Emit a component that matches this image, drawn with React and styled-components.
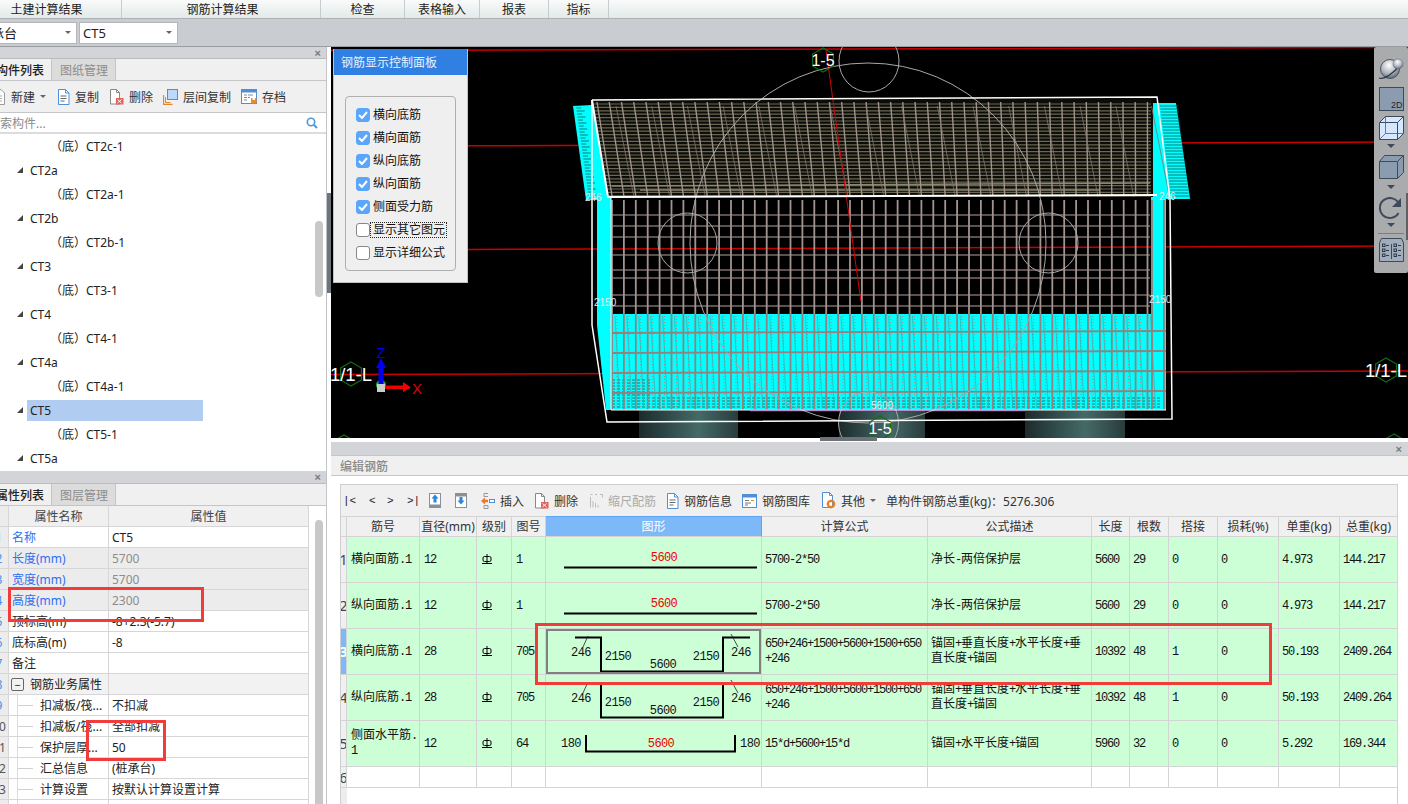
import React from 'react';
import styled, { createGlobalStyle } from 'styled-components';

const UI_FONT = `"Noto Sans", "Noto Sans CJK SC", sans-serif`;

const GlobalStyle = createGlobalStyle`
  html, body {
    margin: 0;
    padding: 0;
    background: #d3d4d8;
    overflow: hidden;
  }
  * {
    box-sizing: border-box;
  }
`;

const Page = styled.div`
  position: relative;
  width: 1408px;
  height: 804px;
  overflow: hidden;
  font-family: ${UI_FONT};
  font-size: 12px;
  color: #222;
  background: #d3d4d8;
`;

/* top menu */
const MenuBar = styled.div`
  display: flex;
  height: 19px;
  background: linear-gradient(#f8fbfa, #e3eae9);
  border-bottom: 1px solid #aeb2b5;
`;

const MenuItem = styled.div`
  display: flex;
  align-items: center;
  justify-content: center;
  flex: none;
  width: ${(p) => p.$w}px;
  height: 18px;
  margin-left: ${(p) => p.$ml || 0}px;
  padding-left: ${(p) => p.$pl || 0}px;
  border-right: 1px solid #c6cbcb;
`;

const SelectBar = styled.div`
  display: flex;
  align-items: center;
  gap: 2px;
  height: 28px;
  background: #c9ccd0;
  border-bottom: 1px solid #9a9da0;
`;

const Select = styled.div`
  display: flex;
  align-items: center;
  justify-content: space-between;
  flex: none;
  width: ${(p) => p.$w}px;
  height: 22px;
  margin-left: ${(p) => p.$ml || 0}px;
  padding: 0 5px 0 3px;
  background: #fff;
  border: 1px solid #b4b6b9;
  font-size: 13px;
`;

const Caret = styled.span`
  width: 0;
  height: 0;
  border-left: 3px solid transparent;
  border-right: 3px solid transparent;
  border-top: 3px solid ${(p) => p.$color || '#666'};
`;

const Main = styled.div`
  display: flex;
  height: 757px;
`;

/* left column */
const LeftColumn = styled.div`
  position: relative;
  display: flex;
  flex-direction: column;
  width: 331px;
  flex: none;
  padding-right: 4px;
  background: #fff;
`;

const SideThumb = styled.div`
  position: absolute;
  top: 146px;
  left: 327px;
  width: 4px;
  height: 100px;
  background: #6c747c;
`;

const Panel = styled.div`
  display: flex;
  flex-direction: column;
  height: ${(p) => p.$h}px;
  overflow: hidden;
  background: #f0f0f0;
  border-right: 1px solid #c2c3c6;
`;

const PanelGrip = styled.div`
  display: flex;
  align-items: center;
  justify-content: flex-end;
  flex: none;
  height: ${(p) => p.$h || 12}px;
  padding-right: 5px;
  background: #d3d4d8;
  color: #77797d;
  font-size: 11px;
  font-family: "Liberation Sans", sans-serif;
  font-weight: bold;
  border-bottom: 1px solid #bbbcc0;
`;

const TabRow = styled.div`
  display: flex;
  flex: none;
  height: 22px;
  background: #f0f0f0;
  border-bottom: 1px solid #c4c5c8;
`;

const Tab = styled.div`
  display: flex;
  align-items: center;
  flex: none;
  height: 21px;
  width: 64px;
  padding: 0 8px;
  font-weight: ${(p) => (p.$active ? 500 : 400)};
  color: ${(p) => (p.$active ? '#222' : '#8d8d8d')};
  background: ${(p) => (p.$active ? '#f0f0f0' : '#dcdcdc')};
  border-right: 1px solid #c4c5c8;
  margin-left: ${(p) => p.$ml || 0}px;
  white-space: nowrap;
`;

const Tools = styled.div`
  display: flex;
  align-items: center;
  flex: none;
  height: 32px;
  margin-left: -7px;
  border-bottom: 1px solid #c4c5c8;
`;

const Tool = styled.div`
  display: flex;
  align-items: center;
  gap: 5px;
  margin-right: ${(p) => p.$mr ?? 11}px;
  white-space: nowrap;
  color: ${(p) => (p.$disabled ? '#aaa' : '#333')};
`;

const MoreArrows = styled.div`
  margin-left: 50px;
  font-size: 9px;
  letter-spacing: -2px;
  color: #444;
`;

const Search = styled.div`
  display: flex;
  align-items: center;
  justify-content: space-between;
  flex: none;
  height: 21px;
  padding: 1px 8px 0 0;
  background: #fff;
  color: #8c8c8c;
  border-bottom: 2px solid #dcdcdc;
`;

const SearchText = styled.span`
  margin-left: -12px;
`;

const TreeBox = styled.div`
  position: relative;
  flex: 1;
  background: #fff;
  overflow: hidden;
`;

const TreeRow = styled.div`
  display: flex;
  align-items: center;
  gap: 7px;
  height: 24px;
  padding-left: ${(p) => (p.$leaf ? 50 : 17)}px;
  color: #222;
`;

const TreeArrow = styled.span`
  width: 0;
  height: 0;
  border-bottom: 6px solid #444;
  border-left: 6px solid transparent;
`;

const TreeLabel = styled.span`
  display: flex;
  align-items: center;
  width: 176px;
  height: 21px;
  margin-left: -3px;
  padding-left: 3px;
  background: ${(p) => (p.$selected ? '#b0ccf0' : 'transparent')};
`;

const TreeThumb = styled.div`
  position: absolute;
  top: 87px;
  left: 315px;
  width: 8px;
  height: 76px;
  border-radius: 4px;
  background: #c8c8c8;
`;

/* property table */
const PropScroll = styled.div`
  position: relative;
  flex: 1;
  overflow: hidden;
  background: #fff;
`;

const PropRow = styled.div`
  display: grid;
  grid-template-columns: 9px 100px 200px;
  height: 21px;
  width: 309px;
  background: ${(p) => p.$bg || '#fff'};
`;

const PropCell = styled.div`
  display: flex;
  align-items: center;
  padding-left: ${(p) => p.$pad ?? 3}px;
  justify-content: ${(p) => (p.$center ? 'center' : 'flex-start')};
  color: ${(p) => p.$color || '#222'};
  border-right: 1px solid #d6d6d6;
  border-bottom: 1px solid #d6d6d6;
  white-space: nowrap;
  overflow: hidden;
`;

const RowNum = styled.div`
  display: flex;
  align-items: center;
  justify-content: center;
  margin-left: -10px;
  background: #ececec;
  color: ${(p) => (p.$blue ? '#4a90e8' : '#555')};
  border-right: 1px solid #d6d6d6;
  border-bottom: 1px solid #d6d6d6;
`;

const HeadCell = styled(PropCell)`
  background: #f0f0f0;
  color: #444;
`;

const TreeLine = styled.span`
  position: relative;
  flex: none;
  width: 16px;
  height: 1px;
  margin: 0 7px 0 8px;
  background: #d0d0d0;

  &::before {
    content: '';
    position: absolute;
    left: 0;
    top: -11px;
    width: 1px;
    height: 22px;
    background: #dcdcdc;
  }
`;

const Collapse = styled.span`
  display: flex;
  align-items: center;
  justify-content: center;
  flex: none;
  width: 13px;
  height: 13px;
  margin: 0 6px 0 2px;
  border: 1px solid #666;
  border-radius: 2px;
  line-height: 1;
  font-size: 11px;
`;

const PropThumb = styled.div`
  position: absolute;
  top: 14px;
  left: 315px;
  width: 8px;
  height: 300px;
  border-radius: 4px;
  background: #c8c8c8;
`;

const ScrollTrack = styled.div`
  position: absolute;
  top: 0;
  bottom: 0;
  left: 309px;
  width: 18px;
  background: #fff;
`;

/* right column */
const RightColumn = styled.div`
  display: flex;
  flex-direction: column;
  flex: 1;
  min-width: 0;
`;

const Viewport = styled.div`
  position: relative;
  flex: none;
  height: 391px;
  background: #000;
  overflow: hidden;
`;

const Drawing = styled.svg`
  display: block;
  width: 1077px;
  height: 391px;
`;

const ControlPanel = styled.div`
  position: absolute;
  top: 2px;
  left: 2px;
  width: 135px;
  height: 234px;
  background: #efefef;
  border: 1px solid #c0c2c8;
  border-top: none;
`;

const ControlHead = styled.div`
  display: flex;
  align-items: center;
  height: 26px;
  padding-left: 7px;
  background: #2f80e2;
  color: #e8f2ff;
`;

const ControlBox = styled.div`
  display: flex;
  flex-direction: column;
  gap: 5px;
  width: 111px;
  height: 175px;
  margin: 21px 0 0 11px;
  padding: 9px 0 0 10px;
  border: 1px solid #b0b0b0;
  border-radius: 4px;
`;

const CheckRow = styled.label`
  display: flex;
  align-items: center;
  gap: 3px;
  height: 18px;
  color: #111;
  white-space: nowrap;
`;

const CheckBox = styled.span`
  display: flex;
  align-items: center;
  justify-content: center;
  flex: none;
  width: 14px;
  height: 14px;
  border-radius: 3px;
  background: ${(p) => (p.$on ? '#5ba6fb' : '#fff')};
  border: 1px solid ${(p) => (p.$on ? '#5ba6fb' : '#888')};
`;

const CheckText = styled.span`
  outline: ${(p) => (p.$focus ? '1px dotted #222' : 'none')};
  margin-left: ${(p) => (p.$focus ? -2 : 0)}px;
  padding-left: ${(p) => (p.$focus ? 2 : 0)}px;
  line-height: 14px;
  width: ${(p) => (p.$focus ? '75px' : 'auto')};
  overflow: hidden;
`;

const Palette = styled.div`
  position: absolute;
  top: 0;
  right: 0;
  display: flex;
  flex-direction: column;
  align-items: center;
  width: 34px;
  height: 226px;
  padding-top: 11px;
  background: #a9abad;
  border-radius: 2px;
`;

const PaletteEdge = styled.div`
  position: absolute;
  top: 146px;
  right: 0;
  width: 2px;
  height: 47px;
  background: #5e6065;
`;

const PaletteLine = styled.div`
  flex: none;
  width: 26px;
  height: 1px;
  margin: 6px 0 4px;
  background: #7b7d80;
`;

const PaletteGap = styled.div`
  flex: none;
  height: ${(p) => p.$h}px;
`;

const DropTick = styled.span`
  flex: none;
  width: 0;
  height: 0;
  margin: ${(p) => p.$t}px 0 ${(p) => p.$b}px;
  border-left: 4px solid transparent;
  border-right: 4px solid transparent;
  border-top: 4px solid #3e4a5a;
`;

const Sash = styled.div`
  position: relative;
  flex: none;
  height: 4px;
  background: #fff;
`;

const SashHandle = styled.div`
  position: absolute;
  top: -1px;
  left: 489px;
  width: 57px;
  height: 4px;
  background: #6e7278;
`;

const BottomPanel = styled.div`
  display: flex;
  flex-direction: column;
  flex: 1;
  background: #fff;
  overflow: hidden;
`;

const BottomGrip = styled(PanelGrip)`
  padding-right: 6px;
  border: none;
`;

const BottomTitle = styled.div`
  display: flex;
  align-items: center;
  flex: none;
  height: 21px;
  padding-left: 9px;
  background: #f0f0f0;
  color: #8a8a8a;
  border-top: 1px solid #c6c7ca;
  border-bottom: 1px solid #c6c7ca;
  font-weight: 500;
`;

const RebarArea = styled.div`
  flex: 1;
  margin: 8px 10px 0 9px;
  width: 1058px;
  background: linear-gradient(90deg, #ededed 6px, #fff 6px);
  border: 1px solid #cfcfcf;
  border-bottom: none;
`;

const RebarTools = styled.div`
  display: flex;
  align-items: center;
  height: 31px;
  padding-left: 2px;
  background: #f0f0f0;
`;

const NavBtn = styled.span`
  display: inline-block;
  width: ${(p) => p.$w}px;
  font-family: "Liberation Mono", monospace;
  font-size: 11px;
  color: #222;
  white-space: pre;
`;

const TotalText = styled.span`
  margin-left: 10px;
  color: #333;
`;

const Row = styled.div`
  display: grid;
  grid-template-columns: 6px 73px 57px 35px 34px 216px 166px 164px 38px 39px 49px 61px 61px 58px;
  height: ${(p) => p.$h}px;
  background: ${(p) => p.$bg || '#fff'};
`;

const Head = styled.div`
  display: flex;
  align-items: center;
  justify-content: center;
  padding-bottom: 1px;
  white-space: nowrap;
  overflow: hidden;
  color: ${(p) => (p.$on ? '#fff' : '#333')};
  background: ${(p) => (p.$on ? '#7db8f8' : '#f0f0f0')};
  border-right: 1px solid ${(p) => (p.$on ? '#5ea6f5' : '#d4d4d4')};
  border-bottom: 1px solid #d4d4d4;
  border-top: 1px solid ${(p) => (p.$on ? '#5ea6f5' : '#d4d4d4')};
`;

const Cell = styled.div`
  position: relative;
  display: flex;
  align-items: center;
  padding: 0 0 1px ${(p) => p.$pad ?? 3}px;
  white-space: pre-line;
  line-height: 14px;
  color: #111;
  border-right: 1px solid #d4d4d4;
  border-bottom: 1px solid #d4d4d4;
  overflow: hidden;
`;

const NumHead = styled.div`
  display: flex;
  align-items: center;
  justify-content: center;
  overflow: hidden;
  font-size: 14px;
  font-weight: ${(p) => (p.$on ? 700 : 400)};
  color: ${(p) => (p.$on ? '#fff' : '#444')};
  background: ${(p) => (p.$on ? '#7db8f8' : '#f0f0f0')};
  border-right: 1px solid #d4d4d4;
  border-bottom: 1px solid #d4d4d4;
`;

const Shape = styled.svg`
  position: absolute;
  top: 0;
  left: 0;
  width: 216px;
  height: 46px;
  overflow: visible;
`;

const ShapeFrame = styled.div`
  position: absolute;
  inset: 0 0 0 0;
  border: 2px solid #808080;
`;

const Mono = styled.span`
  font-family: "Liberation Mono", monospace;
  font-size: 12px;
  letter-spacing: -1.2px;
`;

const Mark = styled.div`
  position: absolute;
  left: ${(p) => p.$x}px;
  top: ${(p) => p.$y}px;
  width: ${(p) => p.$w}px;
  height: ${(p) => p.$h}px;
  border: 3px solid #f23c3c;
  pointer-events: none;
`;

const Mixed = ({ text }) => (
  <span>
    {String(text)
      .split(/([\x20-\x7e]+)/)
      .map((part, i) => (i % 2 ? <Mono key={i}>{part}</Mono> : part))}
  </span>
);

/* icons */
const Doc = ({ color = '#4f8fd8', lines = true }) => (
  <svg width="13" height="16" viewBox="0 0 13 16">
    <path d="M1.5.5h7l3.5 3.5v11.500h-10.500z" fill="#fff" stroke={color} />
    <path d="M8.500.5v3.500h3.500" fill="none" stroke={color} />
    {lines && <path d="M3.500 7h6M3.500 9.500h6M3.500 12h4" stroke="#666" />}
  </svg>
);

const DeleteIcon = () => (
  <svg width="15" height="16" viewBox="0 0 15 16">
    <path d="M1.500.5h6l3 3v11.500h-9z" fill="#fff" stroke="#888" />
    <path d="M7.500.5v3h3" fill="none" stroke="#888" />
    <rect x="7" y="9" width="7.500" height="6.500" fill="#e0605a" />
    <path d="M8.500 10.500l4 3.500M12.500 10.500l-4 3.500" stroke="#fff" />
  </svg>
);

const LayerCopyIcon = () => (
  <svg width="15" height="16" viewBox="0 0 15 16">
    <path d="M.5 6v9.500h9" fill="none" stroke="#e8842c" strokeWidth="1.300" />
    <path d="M2.500 8v5.500h5" fill="none" stroke="#e8842c" />
    <rect x="4.500" y=".5" width="10" height="10" fill="#bcd8fb" stroke="#4f8fd8" />
  </svg>
);

const SaveIcon = () => (
  <svg width="16" height="15" viewBox="0 0 16 15">
    <rect x=".5" y=".5" width="15" height="14" fill="#fff" stroke="#4f8fd8" />
    <rect x="0" y="0" width="16" height="3.500" fill="#4f8fd8" />
    <path d="M3 6h3M7 6h5M3 8.500h3M7 8.500h2M3 11h3" stroke="#888" />
    <rect x="10" y="9" width="5.500" height="5.500" fill="#ec8a2e" />
    <rect x="11.500" y="9" width="2.500" height="2" fill="#fff" />
  </svg>
);

const NewIcon = () => (
  <svg width="13" height="16" viewBox="0 0 13 16">
    <path d="M1 .5h7l3.500 3.500v11.500h-10.500z" fill="#fff" stroke="#999" />
    <path d="M3 7h6M3 9.500h6M3 12h6" stroke="#aaa" />
  </svg>
);

const SearchIcon = () => (
  <svg width="12" height="12" viewBox="0 0 12 12">
    <circle cx="5" cy="5" r="3.700" fill="none" stroke="#4a96d8" strokeWidth="1.600" />
    <path d="M8 8l3 3" stroke="#4a96d8" strokeWidth="2" />
  </svg>
);

const MoveIcon = ({ down }) => (
  <svg width="12" height="15" viewBox="0 0 12 15">
    <rect x=".5" y=".5" width="11" height="14" fill="#fff" stroke="#8a9097" />
    <rect x="0" y={down ? 0 : 11.500} width="12" height="3.500" fill="#8a9097" />
    <path
      d={down ? 'M4.500 4h3v3.500h2l-3.500 4-3.500-4h2z' : 'M6 1.500l3.500 4h-2v4h-3v-4h-2z'}
      fill="#2a86d8"
    />
  </svg>
);

const InsertIcon = () => (
  <svg width="14" height="16" viewBox="0 0 14 16">
    <path d="M3 .5h4M3 .5v3h4M3 12.500h4v3h-4z" fill="none" stroke="#999" />
    <path d="M0 8l4-3.500v2.200h3v2.600h-3v2.200z" fill="#e8782a" />
    <rect x="8.500" y="6.500" width="5" height="3" fill="#fff" stroke="#4f8fd8" />
  </svg>
);

const ScaleIcon = () => (
  <svg width="13" height="14" viewBox="0 0 13 14">
    <path d="M.5 3v10.500M3 7v6.500M5.500 9v4.500M8 11v2.500M.5.500h2M5 .5h2M10 .5h2.500v3" fill="none" stroke="#bbb" />
  </svg>
);

const LibraryIcon = () => (
  <svg width="15" height="14" viewBox="0 0 15 14">
    <rect x=".5" y=".5" width="14" height="13" fill="#fff" stroke="#4f8fd8" />
    <rect x="0" y="0" width="15" height="3.500" fill="#4f8fd8" />
    <path d="M3 6.500h4M3 9h6M3 11h3" stroke="#777" />
    <path d="M9 6.500h3" stroke="#e8842c" />
  </svg>
);

const OtherIcon = () => (
  <svg width="15" height="17" viewBox="0 0 15 17">
    <path d="M1.500.5h7l3 3v12h-10z" fill="#fff" stroke="#4f8fd8" />
    <path d="M8.500.5v3h3" fill="none" stroke="#4f8fd8" />
    <circle cx="10" cy="12" r="3" fill="none" stroke="#ea7d25" strokeWidth="2.200" />
    <path d="M10 7.500v1.500M10 15v1.500M5.500 12h1.500M13 12h1.500M7 9l1 1M12 14l1 1M13 9l-1 1M8 14l-1 1" stroke="#ea7d25" strokeWidth="1.200" />
  </svg>
);

const Check = () => (
  <svg width="10" height="8" viewBox="0 0 10 8">
    <path d="M1 4l3 3 5-6" fill="none" stroke="#fff" strokeWidth="2" />
  </svg>
);

const Grade = () => (
  <svg width="10" height="11" viewBox="0 0 10 11">
    <rect x="1" y="2.500" width="8" height="5" rx="1.500" fill="none" stroke="#000" />
    <path d="M5 0v9.500M0 9.500h10" stroke="#000" />
  </svg>
);

/* palette icons */
const Sphere = () => (
  <svg width="26" height="22" viewBox="0 0 26 22">
    <defs>
      <radialGradient id="ball" cx="0.45" cy="0.3" r="0.75">
        <stop offset="0" stopColor="#ffffff" />
        <stop offset="0.6" stopColor="#aab2bb" />
        <stop offset="1" stopColor="#4a525c" />
      </radialGradient>
    </defs>
    <circle cx="12" cy="11" r="9.500" fill="url(#ball)" stroke="#4d5660" />
    <path d="M1 20c5 2 15-5 21-13" fill="none" stroke="#2e3640" strokeWidth="1.300" />
    <circle cx="20" cy="6" r="5" fill="url(#ball)" stroke="#6a737c" strokeWidth=".6" />
  </svg>
);

const Box2D = () => (
  <svg width="25" height="24" viewBox="0 0 25 24">
    <rect x=".5" y=".5" width="24" height="23" fill="#8c9cb0" stroke="#3e4a5a" />
    <text x="12" y="21" fontSize="9" fontFamily="Liberation Sans" fill="#1a2430">2D</text>
  </svg>
);

const WireCube = () => (
  <svg width="25" height="24" viewBox="0 0 25 24">
    <path d="M.5 6.500l6-6h18v17l-6 6h-18z" fill="#d6e8ff" stroke="#3e4a5a" />
    <path d="M.5 6.500h18v17M18.500 6.500l6-6" fill="none" stroke="#3e4a5a" />
    <path d="M6.500.5v17h18M6.500 17.500l-6 6" fill="none" stroke="#4e5c6c" strokeWidth=".8" />
  </svg>
);

const SolidCube = () => (
  <svg width="25" height="24" viewBox="0 0 25 24">
    <path d="M.5 6.500l5-6h19v17l-6 6h-18z" fill="#8c9cb0" stroke="#3e4a5a" />
    <path d="M.5 6.500h18v17M18.500 6.500l6-6" fill="none" stroke="#3e4a5a" />
  </svg>
);

const Rotate = () => (
  <svg width="24" height="24" viewBox="0 0 24 24">
    <path d="M19.500 16a10 10 0 1 1 .5-9" fill="none" stroke="#3e4a5a" strokeWidth="2" />
    <path d="M22 1v9h-9z" fill="#3e4a5a" />
  </svg>
);

const ListIcon = () => (
  <svg width="25" height="24" viewBox="0 0 25 24">
    <path d="M.5 5l2-4.500h20l2 4.500v18.500h-24z" fill="#a0aebc" stroke="#3e4a5a" />
    <path d="M12.500 6v15" stroke="#3e4a5a" />
    {[6, 11, 16].map((y) => (
      <g key={y} stroke="#2e3a48" fill="none">
        <rect x="3.500" y={y} width="2.500" height="2.500" />
        <path d={`M7 ${y + 1.500}h3`} />
        <rect x="15" y={y} width="2.500" height="2.500" />
        <path d={`M19 ${y + 1.500}h3`} />
      </g>
    ))}
  </svg>
);

/* the rebar model, drawn in screen coordinates */
const range = (from, to, step) => {
  const out = [];
  for (let v = from; v <= to; v += step) out.push(v);
  return out;
};

const BARS = range(612, 1150, 11.9);
const MID_ROWS = [215, 226, 237, 255, 270, 278, 295, 306];
const LOW_ROWS = [332, 352, 372, 392];

const Hexagon = ({ cx, cy, r = 12, label, size = 16 }) => {
  const pts = range(0, 5, 1)
    .map((i) => {
      const a = (Math.PI / 3) * i + Math.PI / 6;
      return `${cx + r * Math.cos(a)},${cy + r * Math.sin(a)}`;
    })
    .join(' ');
  return (
    <g>
      <polygon points={pts} fill="none" stroke="#0f6e12" strokeWidth="1.200" />
      <text x={cx} y={cy + size * 0.36} textAnchor="middle" fontSize={size} fontFamily="Liberation Sans" fill="#fff">
        {label}
      </text>
    </g>
  );
};

const Model = () => {
  return (
    <Drawing viewBox="331 47 1077 391">
      <defs>
        <linearGradient id="pillar" x1="0" x2="1" y1="0" y2="0">
          <stop offset="0" stopColor="#1c2b2b" />
          <stop offset="0.6" stopColor="#446a68" />
          <stop offset="1" stopColor="#2a3c3c" />
        </linearGradient>
      </defs>

      <rect x="639" y="410" width="99" height="28" fill="url(#pillar)" />
      <rect x="839" y="410" width="86" height="28" fill="url(#pillar)" />
      <rect x="1025" y="410" width="100" height="28" fill="url(#pillar)" />

      <g stroke="#c80000" strokeWidth="1.500">
        <path d="M331 50.500L1374 47.500" />
        <path d="M468 145.800L1408 142" />
        <path d="M468 249.500L1408 246" />
        <path d="M331 374.500L1408 371" />
      </g>

      <polygon points="573,106 592,105 611,197 611,200 586,200" fill="#00ffff" />
      <polygon points="1151,103 1176,103 1190,199 1151,199" fill="#00ffff" />
      <polygon points="597,198 611,198 611,410 606,410 597,325" fill="#00ffff" />
      <rect x="1151" y="199" width="15" height="211" fill="#00ffff" />
      <rect x="611" y="314" width="555" height="96" fill="#00ffff" />

      <g stroke="#0b5a5a" strokeWidth="0.800">
        {range(108, 198, 3).map((y) => (
          <path key={`l${y}`} d={`M${576 + (y - 106) * 0.14} ${y}h${y % 2 ? 8 : 5}`} />
        ))}
        {range(106, 198, 3).map((y) => (
          <path key={`r${y}`} d={`M${1160 + (y - 106) * 0.12} ${y}h18`} />
        ))}
        {range(380, 409, 3).map((y) => (
          <path key={`b${y}`} d={`M612 ${y}H${y > 396 ? 1160 : 650}`} strokeDasharray="3 2" />
        ))}
      </g>

      <polygon points="592,101 1153,98 1153,197 608,197" fill="#0c0c08" />
      <g stroke="#6a6652" strokeWidth="1.200">
        {range(104, 196, 3.400).map((y) => (
          <path key={y} d={`M${593 + (y - 100) * 0.16} ${y}H1151`} />
        ))}
      </g>
      <path d="M612 186L1150 183M640 190H1100" stroke="#8a8670" strokeWidth="1.500" />
      <g stroke="#a09488" strokeWidth="1.400">
        {BARS.map((x) => (
          <path key={x} d={`M${x - 15 * (1 - (x - 612) / 538)} 102L${x} 196`} />
        ))}
      </g>
      <g stroke="#7f766c" strokeWidth="0.800">
        {BARS.filter((_, i) => i % 3 === 0).map((x) => (
          <path key={x} d={`M${x + 4} 106L${x + 22} 197`} />
        ))}
      </g>

      <g stroke="#7a6e6a" strokeWidth="1.400">
        {MID_ROWS.map((y) => (
          <path key={y} d={`M612 ${y}H1150`} />
        ))}
      </g>
      <g stroke="#a39490" strokeWidth="1.800">
        {BARS.map((x) => (
          <path key={x} d={`M${x} 200V314`} />
        ))}
      </g>
      <g stroke="#3fa7a5" strokeWidth="0.700">
        {BARS.map((x) => (
          <path key={x} d={`M${x + 3} 316L${x + 8} 408`} />
        ))}
      </g>
      <g stroke="#a08a8a" strokeWidth="1" strokeDasharray="1 2">
        {BARS.map((x) => (
          <path key={x} d={`M${x + 5} 316V408`} />
        ))}
      </g>
      <g stroke="#94807e" strokeWidth="1.800">
        {BARS.map((x) => (
          <path key={x} d={`M${x} 314V410`} />
        ))}
        {range(1152, 1164, 12).map((x) => (
          <path key={x} d={`M${x} 200V410`} />
        ))}
        {LOW_ROWS.map((y) => (
          <path key={y} d={`M611 ${y + 1}L1166 ${y - 1}`} />
        ))}
      </g>

      <path d="M750 410.500H1025" stroke="#7a1a9a" strokeWidth="2" />
      <path d="M826 50L861 302" stroke="#d80000" strokeWidth="1" />

      <g fill="none" stroke="#a8a8a8" strokeWidth="1">
        <ellipse cx="868" cy="243" rx="178" ry="180" />
        <ellipse cx="687.500" cy="243" rx="29.500" ry="30" />
        <ellipse cx="1048.500" cy="243" rx="29.500" ry="30" />
        <ellipse cx="869" cy="61" rx="30" ry="31" />
        <ellipse cx="868.500" cy="423" rx="30" ry="31" />
      </g>

      <g fill="none" stroke="#fff">
        <path d="M592 100L1157 97L1170 199L1172 419L607 422L592 325V197L592 100" strokeWidth="1.500" />
        <path d="M592 100L608 197L1157 195" strokeWidth="2" />
        <path d="M611 197V410H1166" strokeWidth="1" />
      </g>

      <g fontFamily="Liberation Sans" fontSize="10" fill="#e8e8e8">
        <text x="585" y="201">246</text>
        <text x="1159" y="200">246</text>
        <text x="594" y="306">2150</text>
        <text x="1149" y="303">2150</text>
        <text x="871" y="409">5600</text>
      </g>

      <Hexagon cx={823} cy={60} label="1-5" />
      <Hexagon cx={880} cy={428} label="1-5" />
      <Hexagon cx={351} cy={374} label="1/1-L" size={18.500} />
      <Hexagon cx={1386} cy={370} label="1/1-L" size={18.500} />
      <Hexagon cx={344} cy={447} label="1-1" />
      <Hexagon cx={1394} cy={446} label="1-1" />

      <g>
        <circle cx="381" cy="385" r="5" fill="#18c018" />
        <path d="M378.500 385V368H376L381 358L386 368H383.500V385z" fill="#0000f0" />
        <path d="M381 385.500H403V382L411 387.500L403 392V389H381z" fill="#f00000" />
        <rect x="377" y="384" width="8" height="8" fill="#ccc" />
        <text x="381" y="358" textAnchor="middle" fontSize="15" fontFamily="Liberation Sans" fill="#0000e0">Z</text>
        <text x="412" y="394" fontSize="15" fontFamily="Liberation Sans" fill="#e00000">X</text>
      </g>
    </Drawing>
  );
};

const CHECKS = [
  ['横向底筋', true],
  ['横向面筋', true],
  ['纵向底筋', true],
  ['纵向面筋', true],
  ['侧面受力筋', true],
  ['显示其它图元', false, true],
  ['显示详细公式', false],
];

const TREE = [
  ['（底）CT2c-1', 1],
  ['CT2a', 0],
  ['（底）CT2a-1', 1],
  ['CT2b', 0],
  ['（底）CT2b-1', 1],
  ['CT3', 0],
  ['（底）CT3-1', 1],
  ['CT4', 0],
  ['（底）CT4-1', 1],
  ['CT4a', 0],
  ['（底）CT4a-1', 1],
  ['CT5', 0, true],
  ['（底）CT5-1', 1],
  ['CT5a', 0],
];

const PROPS = [
  { name: '名称', value: 'CT5', blue: true },
  { name: '长度(mm)', value: '5700', blue: true, grey: true },
  { name: '宽度(mm)', value: '5700', blue: true, grey: true },
  { name: '高度(mm)', value: '2300', blue: true, grey: true },
  { name: '顶标高(m)', value: '-8+2.3(-5.7)' },
  { name: '底标高(m)', value: '-8' },
  { name: '备注', value: '' },
  { name: '钢筋业务属性', value: '', section: true },
  { name: '扣减板/筏...', value: '不扣减', child: true },
  { name: '扣减板/筏...', value: '全部扣减', child: true },
  { name: '保护层厚...', value: '50', child: true },
  { name: '汇总信息', value: '(桩承台)', child: true },
  { name: '计算设置', value: '按默认计算设置计算', child: true },
  { name: '', value: '', child: true },
];

const HEADS = ['筋号', '直径(mm)', '级别', '图号', '图形', '计算公式', '公式描述', '长度', '根数', '搭接', '损耗(%)', '单重(kg)', '总重(kg)'];

const LONG_FORMULA = '650+246+1500+5600+1500+650\n+246';
const LONG_DESC = '锚固+垂直长度+水平长度+垂\n直长度+锚固';

const REBARS = [
  { name: '横向面筋.1', d: 12, fig: 1, shape: 'line', formula: '5700-2*50', desc: '净长-两倍保护层', len: 5600, count: 29, lap: 0, unit: '4.973', total: '144.217' },
  { name: '纵向面筋.1', d: 12, fig: 1, shape: 'line', formula: '5700-2*50', desc: '净长-两倍保护层', len: 5600, count: 29, lap: 0, unit: '4.973', total: '144.217' },
  { name: '横向底筋.1', d: 28, fig: 705, shape: 'hat', formula: LONG_FORMULA, desc: LONG_DESC, len: 10392, count: 48, lap: 1, unit: '50.193', total: '2409.264', on: true },
  { name: '纵向底筋.1', d: 28, fig: 705, shape: 'hat', formula: LONG_FORMULA, desc: LONG_DESC, len: 10392, count: 48, lap: 1, unit: '50.193', total: '2409.264' },
  { name: '侧面水平筋.\n1', d: 12, fig: 64, shape: 'tray', formula: '15*d+5600+15*d', desc: '锚固+水平长度+锚固', len: 5960, count: 32, lap: 0, unit: '5.292', total: '169.344' },
];

const ShapeText = ({ x, y, red, children }) => (
  <text
    x={x}
    y={y}
    textAnchor="middle"
    fontFamily="Liberation Mono"
    fontSize="12"
    letterSpacing="-0.600"
    fill={red ? '#f00000' : '#111'}
  >
    {children}
  </text>
);

const RebarShape = ({ kind }) => {
  if (kind === 'line') {
    return (
      <Shape viewBox="0 0 216 46">
        <ShapeText x={118} y={24} red>5600</ShapeText>
        <path d="M18 30.500H211" stroke="#000" strokeWidth="2" />
      </Shape>
    );
  }
  if (kind === 'tray') {
    return (
      <Shape viewBox="0 0 216 46">
        <ShapeText x={25} y={26}>180</ShapeText>
        <path d="M40 14V30.500H189V14" fill="none" stroke="#000" strokeWidth="2" />
        <ShapeText x={115} y={26} red>5600</ShapeText>
        <ShapeText x={204} y={26}>180</ShapeText>
      </Shape>
    );
  }
  return (
    <Shape viewBox="0 0 216 46">
      <path d="M29 8.500H55V42.500H177V8.500H204" fill="none" stroke="#000" strokeWidth="2" />
      <path d="M42 7L37 18M185 5L192 18" stroke="#222" strokeWidth="0.800" />
      <ShapeText x={35} y={27}>246</ShapeText>
      <ShapeText x={72} y={31}>2150</ShapeText>
      <ShapeText x={117} y={39}>5600</ShapeText>
      <ShapeText x={160} y={31}>2150</ShapeText>
      <ShapeText x={195} y={27}>246</ShapeText>
    </Shape>
  );
};

const App = () => {
  return (
    <Page>
      <GlobalStyle />
      <MenuBar>
        <MenuItem $w={150} $ml={-28}>土建计算结果</MenuItem>
        <MenuItem $w={199} $pl={3}>钢筋计算结果</MenuItem>
        <MenuItem $w={84}>检查</MenuItem>
        <MenuItem $w={75}>表格输入</MenuItem>
        <MenuItem $w={69}>报表</MenuItem>
        <MenuItem $w={60}>指标</MenuItem>
      </MenuBar>
      <SelectBar>
        <Select $w={103} $ml={-26}>
          桩承台
          <Caret />
        </Select>
        <Select $w={99}>
          CT5
          <Caret />
        </Select>
      </SelectBar>
      <Main>
        <LeftColumn>
          <Panel $h={424}>
            <PanelGrip>×</PanelGrip>
            <TabRow>
              <Tab $active $ml={-12}>构件列表</Tab>
              <Tab>图纸管理</Tab>
            </TabRow>
            <Tools>
              <Tool>
                <NewIcon />
                <span>新建</span>
                <Caret />
              </Tool>
              <Tool $mr={10}><Doc /><span>复制</span></Tool>
              <Tool $mr={10}><DeleteIcon /><span>删除</span></Tool>
              <Tool $mr={10}><LayerCopyIcon /><span>层间复制</span></Tool>
              <Tool $mr={0}><SaveIcon /><span>存档</span></Tool>
              <MoreArrows>▶▶</MoreArrows>
            </Tools>
            <Search>
              <SearchText>搜索构件...</SearchText>
              <SearchIcon />
            </Search>
            <TreeBox>
              {TREE.map(([label, leaf, selected]) => (
                <TreeRow key={label} $leaf={leaf}>
                  {!leaf && <TreeArrow />}
                  {leaf ? label : <TreeLabel $selected={selected}>{label}</TreeLabel>}
                </TreeRow>
              ))}
              <TreeThumb />
            </TreeBox>
          </Panel>
          <Panel $h={333}>
            <PanelGrip $h={13}>×</PanelGrip>
            <TabRow>
              <Tab $active $ml={-12}>属性列表</Tab>
              <Tab>图层管理</Tab>
            </TabRow>
            <PropScroll>
              <PropRow>
                <RowNum />
                <HeadCell $center $pad={0}>属性名称</HeadCell>
                <HeadCell $center $pad={0}>属性值</HeadCell>
              </PropRow>
              {PROPS.map((p, i) => (
                <PropRow key={i} $bg={p.grey ? '#ececec' : p.section ? '#f2f2f2' : '#fff'}>
                  <RowNum $blue={i < 9}>{i + 1}</RowNum>
                  <PropCell $color={p.blue ? '#2f6ff0' : '#222'} $pad={p.child || p.section ? 0 : 3}>
                    {p.child && <TreeLine />}
                    {p.section && <Collapse>−</Collapse>}
                    {p.name}
                  </PropCell>
                  <PropCell $color={p.grey ? '#8c8c8c' : '#222'}>{p.value}</PropCell>
                </PropRow>
              ))}
              <ScrollTrack />
              <PropThumb />
            </PropScroll>
          </Panel>
          <SideThumb />
        </LeftColumn>
        <RightColumn>
          <Viewport>
            <Model />
            <ControlPanel>
              <ControlHead>钢筋显示控制面板</ControlHead>
              <ControlBox>
                {CHECKS.map(([label, on, focus]) => (
                  <CheckRow key={label}>
                    <CheckBox $on={on}>{on && <Check />}</CheckBox>
                    <CheckText $focus={focus}>{label}</CheckText>
                  </CheckRow>
                ))}
              </ControlBox>
            </ControlPanel>
            <Palette>
              <Sphere />
              <PaletteGap $h={7} />
              <Box2D />
              <PaletteGap $h={5} />
              <WireCube />
              <DropTick $t={4} $b={7} />
              <SolidCube />
              <DropTick $t={6} $b={8} />
              <Rotate />
              <DropTick $t={2} $b={0} />
              <PaletteLine />
              <ListIcon />
              <PaletteEdge />
            </Palette>
          </Viewport>
          <Sash>
            <SashHandle />
          </Sash>
          <BottomPanel>
            <BottomGrip $h={13}>×</BottomGrip>
            <BottomTitle>编辑钢筋</BottomTitle>
            <RebarArea>
              <RebarTools>
                <NavBtn $w={26}>{'|<'}</NavBtn>
                <NavBtn $w={18}>{'<'}</NavBtn>
                <NavBtn $w={20}>{'>'}</NavBtn>
                <NavBtn $w={22}>{'>|'}</NavBtn>
                <Tool $mr={14}><MoveIcon /></Tool>
                <Tool $mr={14}><MoveIcon down /></Tool>
                <Tool $mr={10}><InsertIcon /><span>插入</span></Tool>
                <Tool $mr={12}><DeleteIcon /><span>删除</span></Tool>
                <Tool $disabled $mr={10}><ScaleIcon /><span>缩尺配筋</span></Tool>
                <Tool $mr={10}><Doc /><span>钢筋信息</span></Tool>
                <Tool $mr={11}><LibraryIcon /><span>钢筋图库</span></Tool>
                <Tool $mr={5}><OtherIcon /><span>其他</span></Tool>
                <Caret />
                <TotalText>单构件钢筋总重(kg)：5276.306</TotalText>
              </RebarTools>
              <Row $h={21}>
                <Head />
                {HEADS.map((h) => (
                  <Head key={h} $on={h === '图形'}>{h}</Head>
                ))}
              </Row>
              {REBARS.map((r, i) => (
                <Row key={r.name} $h={46} $bg="#ccffd6">
                  <NumHead $on={r.on}>{i + 1}</NumHead>
                  <Cell $pad={4}><Mixed text={r.name} /></Cell>
                  <Cell $pad={4}><Mixed text={r.d} /></Cell>
                  <Cell $pad={5}><Grade /></Cell>
                  <Cell $pad={4}><Mixed text={r.fig} /></Cell>
                  <Cell>
                    <RebarShape kind={r.shape} />
                    {r.on && <ShapeFrame />}
                  </Cell>
                  <Cell><Mixed text={r.formula} /></Cell>
                  <Cell><Mixed text={r.desc} /></Cell>
                  <Cell><Mixed text={r.len} /></Cell>
                  <Cell><Mixed text={r.count} /></Cell>
                  <Cell><Mixed text={r.lap} /></Cell>
                  <Cell><Mixed text="0" /></Cell>
                  <Cell><Mixed text={r.unit} /></Cell>
                  <Cell><Mixed text={r.total} /></Cell>
                </Row>
              ))}
              <Row $h={21}>
                <NumHead>6</NumHead>
                {HEADS.map((h) => (
                  <Cell key={h} />
                ))}
              </Row>
            </RebarArea>
          </BottomPanel>
        </RightColumn>
      </Main>
      <Mark $x={8} $y={587} $w={196} $h={35} />
      <Mark $x={86} $y={720} $w={80} $h={41} />
      <Mark $x={535} $y={623} $w={737} $h={62} />
    </Page>
  );
};

export default App;
